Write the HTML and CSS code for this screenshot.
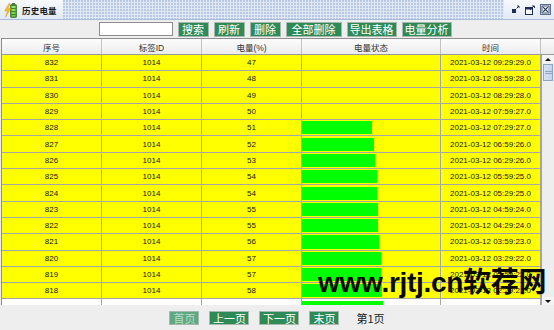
FILE: index.html
```html
<!DOCTYPE html>
<html lang="zh-CN">
<head>
<meta charset="utf-8">
<title>历史电量</title>
<link rel="stylesheet" href="styles.css">
</head>
<body>
<div class="titlebar">
  <div class="tb-label">
    <svg class="tb-icon" width="16" height="16" viewBox="0 0 16 16">
      <rect x="9" y="1" width="3" height="1.5" fill="#5a7a3a"/>
      <rect x="7.5" y="2.5" width="6" height="13" rx="0.8" fill="#3c8c2c" stroke="#2a5e20" stroke-width="0.6"/>
      <rect x="8.5" y="4" width="4" height="2" fill="#9be36a"/>
      <rect x="8.5" y="7" width="4" height="2" fill="#8ede5a"/>
      <rect x="8.5" y="10" width="4" height="2" fill="#7ed24a"/>
      <rect x="8.5" y="13" width="4" height="1.6" fill="#6cc83a"/>
      <polygon points="6,1.5 1.5,9 4.5,9 2.5,15 8,6.5 5,6.5 7,1.5" fill="#f7c21a" stroke="#c98a00" stroke-width="0.4"/>
    </svg>
    <span class="tb-text">历史电量</span>
  </div>
  <div class="tb-fill"></div>
  <div class="tb-controls">
    <svg width="9" height="9" viewBox="0 0 9 9">
      <rect x="1" y="4" width="4" height="4" fill="#1d2d55"/>
      <path d="M5.5 3.5 L8 1 M6 1 H8 V3" stroke="#1d2d55" stroke-width="0.9" fill="none"/>
    </svg>
    <svg width="10" height="10" viewBox="0 0 10 10">
      <rect x="0.5" y="2.5" width="7" height="7" fill="#fff" stroke="#1d2d55" stroke-width="1"/>
      <rect x="1" y="3" width="6" height="1.5" fill="#1d2d55"/>
      <path d="M5 5 L9 1 M7 1 H9.5 V3" stroke="#1d2d55" stroke-width="0.9" fill="none"/>
    </svg>
    <svg width="11" height="11" viewBox="0 0 11 11">
      <rect x="0.5" y="0.5" width="10" height="10" fill="#e8eef7" stroke="#5b6f93" stroke-width="1"/>
      <rect x="2" y="2" width="7" height="7" fill="#fff" stroke="#1d2d55" stroke-width="0.8"/>
      <path d="M3.2 3.2 L7.8 7.8 M7.8 3.2 L3.2 7.8" stroke="#1d2d55" stroke-width="1.1"/>
    </svg>
  </div>
</div>

<div class="toolbar">
  <input class="search" type="text">
  <span class="btn w31">搜索</span>
  <span class="btn w31">刷新</span>
  <span class="btn w31">删除</span>
  <span class="btn w56">全部删除</span>
  <span class="btn w50">导出表格</span>
  <span class="btn w50">电量分析</span>
</div>

<div class="table">
  <div class="thead">
    <div class="hrow">
      <div class="th">序号</div>
      <div class="th">标签ID</div>
      <div class="th">电量(%)</div>
      <div class="th">电量状态</div>
      <div class="th">时间</div>
    </div>
    <div class="corner"></div>
  </div>
  <div class="tbody">
    <div class="rows">
      <div class="row"><div class="cell">832</div><div class="cell">1014</div><div class="cell">47</div><div class="cell bar"></div><div class="cell">2021-03-12 09:29:29.0</div></div>
      <div class="row"><div class="cell">831</div><div class="cell">1014</div><div class="cell">48</div><div class="cell bar"></div><div class="cell">2021-03-12 08:59:28.0</div></div>
      <div class="row"><div class="cell">830</div><div class="cell">1014</div><div class="cell">49</div><div class="cell bar"></div><div class="cell">2021-03-12 08:29:28.0</div></div>
      <div class="row"><div class="cell">829</div><div class="cell">1014</div><div class="cell">50</div><div class="cell bar"></div><div class="cell">2021-03-12 07:59:27.0</div></div>
      <div class="row"><div class="cell">828</div><div class="cell">1014</div><div class="cell">51</div><div class="cell bar"><span class="fill" style="width:51%"></span></div><div class="cell">2021-03-12 07:29:27.0</div></div>
      <div class="row"><div class="cell">827</div><div class="cell">1014</div><div class="cell">52</div><div class="cell bar"><span class="fill" style="width:52%"></span></div><div class="cell">2021-03-12 06:59:26.0</div></div>
      <div class="row"><div class="cell">826</div><div class="cell">1014</div><div class="cell">53</div><div class="cell bar"><span class="fill" style="width:53%"></span></div><div class="cell">2021-03-12 06:29:26.0</div></div>
      <div class="row"><div class="cell">825</div><div class="cell">1014</div><div class="cell">54</div><div class="cell bar"><span class="fill" style="width:54%"></span></div><div class="cell">2021-03-12 05:59:25.0</div></div>
      <div class="row"><div class="cell">824</div><div class="cell">1014</div><div class="cell">54</div><div class="cell bar"><span class="fill" style="width:54%"></span></div><div class="cell">2021-03-12 05:29:25.0</div></div>
      <div class="row"><div class="cell">823</div><div class="cell">1014</div><div class="cell">55</div><div class="cell bar"><span class="fill" style="width:55%"></span></div><div class="cell">2021-03-12 04:59:24.0</div></div>
      <div class="row"><div class="cell">822</div><div class="cell">1014</div><div class="cell">55</div><div class="cell bar"><span class="fill" style="width:55%"></span></div><div class="cell">2021-03-12 04:29:24.0</div></div>
      <div class="row"><div class="cell">821</div><div class="cell">1014</div><div class="cell">56</div><div class="cell bar"><span class="fill" style="width:56%"></span></div><div class="cell">2021-03-12 03:59:23.0</div></div>
      <div class="row"><div class="cell">820</div><div class="cell">1014</div><div class="cell">57</div><div class="cell bar"><span class="fill" style="width:57%"></span></div><div class="cell">2021-03-12 03:29:22.0</div></div>
      <div class="row"><div class="cell">819</div><div class="cell">1014</div><div class="cell">57</div><div class="cell bar"><span class="fill" style="width:57%"></span></div><div class="cell">2021-03-12 02:59:22.0</div></div>
      <div class="row"><div class="cell">818</div><div class="cell">1014</div><div class="cell">58</div><div class="cell bar"><span class="fill" style="width:58%"></span></div><div class="cell">2021-03-12 02:29:21.0</div></div>
      <div class="row plain"><div class="cell">817</div><div class="cell">1014</div><div class="cell">59</div><div class="cell bar"><span class="fill" style="width:59%"></span></div><div class="cell">2021-03-12 01:59:20.0</div></div>
    </div>
    <div class="vscroll">
      <div class="arrow"><span class="tri-up"></span></div>
      <div class="thumb"><span class="grip"></span></div>
      <div class="track"></div>
      <div class="arrow"><span class="tri-down"></span></div>
    </div>
  </div>
</div>

<div class="footer">
  <span class="btn w30 disabled">首页</span>
  <span class="btn w40">上一页</span>
  <span class="btn w40">下一页</span>
  <span class="btn w30">末页</span>
  <span class="page">第1页</span>
</div>

<div class="watermark">www.rjtj.cn软荐网</div>
</body>
</html>
```

FILE: styles.css
```css
* { box-sizing: border-box; margin: 0; padding: 0; }

body {
  width: 554px;
  height: 330px;
  overflow: hidden;
  position: relative;
  background: #eeeeee;
  font-family: "Liberation Sans", "Noto Sans CJK SC", sans-serif;
  color: #1a1a1a;
}

/* ---------- title bar ---------- */
.titlebar {
  display: flex;
  height: 20px;
  border-bottom: 1px solid #a9bcd8;
  background: linear-gradient(#f8fafd, #e1e9f4);
}
.tb-label {
  display: flex;
  align-items: center;
  gap: 3px;
  padding: 0 6px 0 3px;
}
.tb-icon { display: block; }
.tb-text {
  font-family: "Noto Sans CJK SC", sans-serif;
  font-weight: bold;
  font-size: 8.5px;
  color: #1e1e1e;
  letter-spacing: 0.2px;
}
.tb-fill {
  flex: 1;
  background-color: #dfe8f4;
  background-image: radial-gradient(circle at 1px 1px, #b7c9e4 0.75px, transparent 1.1px);
  background-size: 3px 3px;
}
.tb-controls {
  display: flex;
  align-items: center;
  gap: 5px;
  padding: 0 3px 0 7px;
}
.tb-controls svg { display: block; }

/* ---------- toolbar ---------- */
.toolbar {
  display: flex;
  justify-content: center;
  align-items: center;
  gap: 5px;
  height: 18px;
  padding-right: 4px;
}
.search {
  width: 74px;
  height: 14px;
  border: 1px solid #8d8d8d;
  background: #fff;
  outline: none;
}
.btn {
  display: inline-block;
  height: 15px;
  line-height: 13px;
  font-family: "Noto Sans CJK SC", sans-serif;
  font-size: 11px;
  text-align: center;
  color: #ffffff;
  background: #2e8b57;
  border: 1px solid #a9b8ae;
  white-space: nowrap;
}
.btn.disabled { background: #5fa881; color: #b8dcc6; }
.w30 { width: 30px; }
.w31 { width: 31px; }
.w40 { width: 40px; }
.w50 { width: 50px; }
.w56 { width: 56px; }

/* ---------- table ---------- */
.table {
  margin-left: 1px;
  border-top: 1px solid #8f8f8f;
  border-left: 1px solid #8f8f8f;
}
.thead {
  display: flex;
  height: 16px;
  border-bottom: 1px solid #9a9a9a;
}
.hrow, .row {
  display: grid;
  grid-template-columns: 100px 100px 100px 139px 100px;
}
.th {
  display: flex;
  align-items: center;
  justify-content: center;
  font-size: 8.5px;
  color: #333;
  background: linear-gradient(#fdfdfd, #ececec);
  border-right: 1px solid #c2c2c2;
}
.corner {
  flex: 1;
  background: linear-gradient(#fafafa, #ebebeb);
}
.tbody {
  display: flex;
  height: 250px;
  overflow: hidden;
}
.rows { width: 539px; }
.row {
  height: 16.3px;
  background: #ffff00;
  border-bottom: 1px solid #a5a5a5;
}
.row.plain { background: #ffffff; }
.cell {
  display: flex;
  align-items: center;
  justify-content: center;
  font-size: 8px;
  color: #151515;
  border-right: 1px solid #a5a5a5;
  white-space: nowrap;
  overflow: hidden;
}
.cell.bar {
  justify-content: flex-start;
  align-items: stretch;
  padding: 1.2px 0 1px 0;
}
.fill { display: block; background: #00ff00; }

/* ---------- scrollbar ---------- */
.vscroll {
  flex: 1;
  display: flex;
  flex-direction: column;
  background: #eeeeee;
  border-left: 1px solid #a3a3a3;
}
.arrow {
  height: 8px;
  display: flex;
  align-items: center;
  justify-content: center;
  background: #f4f4f4;
}
.tri-up, .tri-down {
  width: 0;
  height: 0;
  border-left: 3px solid transparent;
  border-right: 3px solid transparent;
}
.tri-up { border-bottom: 3px solid #111; }
.tri-down { border-top: 3px solid #111; }
.thumb {
  height: 17px;
  margin: 1px 1px 0 1px;
  border: 1px solid #8fa6c9;
  background: linear-gradient(90deg, #d7e2f2, #c4d4ec);
  display: flex;
  align-items: center;
  justify-content: center;
}
.grip {
  width: 7px;
  height: 3px;
  border-top: 1px solid #8ea4c8;
  border-bottom: 1px solid #8ea4c8;
}
.track { flex: 1; }

/* ---------- footer ---------- */
.footer {
  display: flex;
  justify-content: center;
  align-items: flex-start;
  gap: 10px;
  height: 26px;
  padding-top: 6px;
}
.footer .btn { height: 14px; line-height: 12px; }
.page {
  margin-left: 7px;
  font-family: "Noto Sans CJK SC", sans-serif;
  font-size: 11px;
  line-height: 14px;
  color: #222;
}

/* ---------- watermark overlay ---------- */
.watermark {
  position: absolute;
  left: 318px;
  top: 268px;
  font-family: "Liberation Sans", "Noto Sans CJK SC", sans-serif;
  font-weight: bold;
  font-size: 28px;
  line-height: 29px;
  color: #0a0a0a;
  white-space: nowrap;
  letter-spacing: -0.3px;
}
```
